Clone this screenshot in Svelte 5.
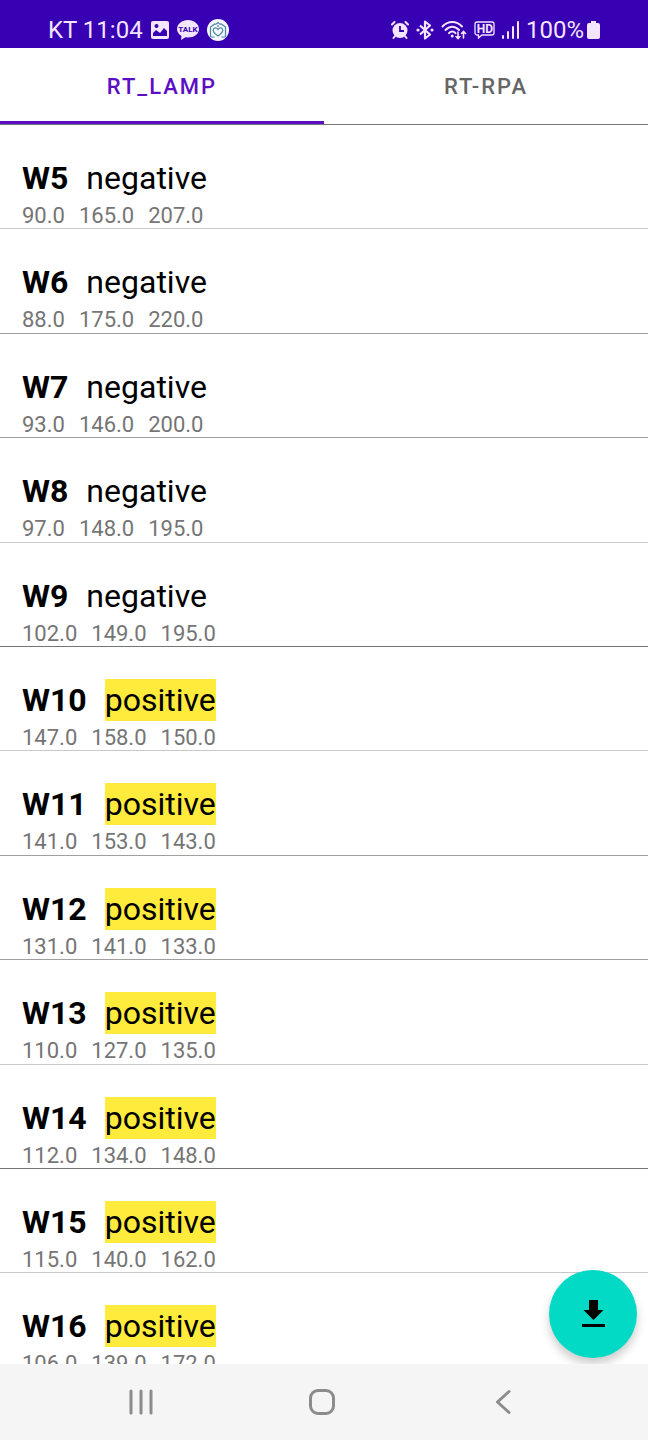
<script lang="ts">
	interface Well {
		name: string;
		result: 'negative' | 'positive';
		values: string[];
	}

	const tabs = ['RT_LAMP', 'RT-RPA'];
	let activeTab = $state('RT_LAMP');

	const wells: Well[] = [
		{ name: 'W5', result: 'negative', values: ['90.0', '165.0', '207.0'] },
		{ name: 'W6', result: 'negative', values: ['88.0', '175.0', '220.0'] },
		{ name: 'W7', result: 'negative', values: ['93.0', '146.0', '200.0'] },
		{ name: 'W8', result: 'negative', values: ['97.0', '148.0', '195.0'] },
		{ name: 'W9', result: 'negative', values: ['102.0', '149.0', '195.0'] },
		{ name: 'W10', result: 'positive', values: ['147.0', '158.0', '150.0'] },
		{ name: 'W11', result: 'positive', values: ['141.0', '153.0', '143.0'] },
		{ name: 'W12', result: 'positive', values: ['131.0', '141.0', '133.0'] },
		{ name: 'W13', result: 'positive', values: ['110.0', '127.0', '135.0'] },
		{ name: 'W14', result: 'positive', values: ['112.0', '134.0', '148.0'] },
		{ name: 'W15', result: 'positive', values: ['115.0', '140.0', '162.0'] },
		{ name: 'W16', result: 'positive', values: ['106.0', '139.0', '172.0'] }
	];
</script>

<div class="screen">
	<header class="status-bar">
		<div class="status-group">
			<span class="clock">KT 11:04</span>
			<svg width="18" height="18" viewBox="0 0 18 18" aria-hidden="true">
				<path
					fill="currentColor"
					fill-rule="evenodd"
					d="M2 0h14a2 2 0 0 1 2 2v14a2 2 0 0 1-2 2H2a2 2 0 0 1-2-2V2a2 2 0 0 1 2-2zM2 15v-3l3-3 4 3 4-5 3 3v5zM5.5 3a2 2 0 1 0 0 4 2 2 0 0 0 0-4z"
				/>
			</svg>
			<svg width="22" height="20" viewBox="0 0 22 20" aria-hidden="true">
				<path
					fill="currentColor"
					d="M11 0C5 0 0 4 0 9c0 3 2 5.5 4.500 7L4 20l4.500-2.800L11 17.500c6 0 11-3.500 11-8.500S17 0 11 0z"
				/>
				<text x="11" y="12" text-anchor="middle" class="talk">TALK</text>
			</svg>
			<svg width="22" height="22" viewBox="0 0 22 22" aria-hidden="true">
				<circle cx="11" cy="11" r="11" fill="#f6f6ff" />
				<g fill="none" stroke="#4b8a9d" stroke-width="1.2">
					<path d="M7.500 18H4.500a1 1 0 0 1-1-1V8l4-2.800h1.500l2-1.700 2 1.700h1.500l4 2.800v9a1 1 0 0 1-1 1h-3" />
					<path d="M11 17C7.500 14.500 6.200 13 6.200 11.200c0-2.800 3.500-3.200 4.800-.7 1.300-2.500 4.800-2.100 4.800.7 0 1.800-1.300 3.300-4.800 5.800zM11 6v2" />
				</g>
			</svg>
		</div>
		<div class="status-group right">
			<svg width="18" height="20" viewBox="0 0 18 20" aria-hidden="true">
				<circle cx="9" cy="10.5" r="7.5" fill="currentColor" />
				<path
					fill="none"
					stroke="currentColor"
					stroke-width="2"
					stroke-linecap="round"
					d="M1 4.500l2.500-2.500M17 4.500l-2.500-2.500M4 16l-1.500 2M14 16l1.500 2"
				/>
				<path fill="none" stroke="#3700b3" stroke-width="1.8" d="M9 6v5h4" />
			</svg>
			<svg width="18" height="20" viewBox="0 0 18 20" aria-hidden="true">
				<path
					fill="none"
					stroke="currentColor"
					stroke-width="2.200"
					stroke-linejoin="round"
					d="M4 5.500l10 9-5 4v-17l5 4-10 9"
				/>
				<circle cx="2" cy="10" r="1.6" fill="currentColor" />
				<circle cx="16" cy="10" r="1.6" fill="currentColor" />
			</svg>
			<svg width="26" height="20" viewBox="0 0 26 20" aria-hidden="true">
				<g fill="none" stroke="currentColor" stroke-width="2" stroke-linecap="round">
					<path d="M1.500 6.500C7 .5 15.500.5 21 6.500M4.500 10c4-4.500 9.500-4.500 13.500 0M8 13.200c2-2.200 4.500-2.200 6.500 0" />
					<path stroke-width="1.6" d="M17 12v6.500M15 16.500l2 2 2-2M22.500 18v-6.500M20.500 13.500l2-2 2 2" />
				</g>
				<circle cx="11.200" cy="16" r="1.500" fill="currentColor" />
			</svg>
			<svg width="21" height="18" viewBox="0 0 21 18" aria-hidden="true">
				<path
					fill="none"
					stroke="currentColor"
					stroke-width="1.3"
					d="M3 1h15a2 2 0 0 1 2 2v9a2 2 0 0 1-2 2H8l-3.500 3V14H3a2 2 0 0 1-2-2V3a2 2 0 0 1 2-2z"
				/>
				<text x="11" y="12" text-anchor="middle" class="hd">HD</text>
			</svg>
			<svg width="17" height="18" viewBox="0 0 17 18" aria-hidden="true">
				<path
					fill="none"
					stroke="currentColor"
					stroke-width="2"
					stroke-linecap="round"
					d="M1 15v2M6 11v6M11 6v11M16 1v16"
				/>
			</svg>
			<span class="battery">
				100%
				<svg width="13" height="18" viewBox="0 0 13 18" aria-hidden="true">
					<path
						fill="currentColor"
						d="M4 0h5v2h2a2 2 0 0 1 2 2v12a2 2 0 0 1-2 2H2a2 2 0 0 1-2-2V4a2 2 0 0 1 2-2h2z"
					/>
				</svg>
			</span>
		</div>
	</header>

	<div class="tabs" role="tablist">
		{#each tabs as tab}
			<button
				class="tab"
				class:active={tab === activeTab}
				role="tab"
				aria-selected={tab === activeTab}
				onclick={() => (activeTab = tab)}
			>
				{tab}
			</button>
		{/each}
	</div>

	<main class="results">
		<ul class="wells">
			{#each wells as well}
				<li class="well">
					<div class="well-head">
						<strong>{well.name}</strong>
						<span class="result" class:positive={well.result === 'positive'}>{well.result}</span>
					</div>
					<div class="values">
						{#each well.values as value}
							<span>{value}</span>
						{/each}
					</div>
				</li>
			{/each}
		</ul>
		<button class="fab" aria-label="Download">
			<svg width="24" height="28" viewBox="0 0 24 28" aria-hidden="true">
				<path fill="#000" d="M8 0h9v10h5.500L12.500 20l-10-10H8zM1 24h23v3H1z" />
			</svg>
		</button>
	</main>

	<nav class="nav-bar">
		<button aria-label="Recent apps">
			<svg width="24" height="26" viewBox="0 0 24 26" aria-hidden="true">
				<path d="M2 2v22M12 2v22M22 2v22" />
			</svg>
		</button>
		<button aria-label="Home">
			<svg width="28" height="28" viewBox="0 0 28 28" aria-hidden="true">
				<rect x="2.500" y="2.500" width="23" height="23" rx="7.500" />
			</svg>
		</button>
		<button aria-label="Back">
			<svg width="16" height="26" viewBox="0 0 16 26" aria-hidden="true">
				<path d="M14 2.500L2.500 13 14 23.500" />
			</svg>
		</button>
	</nav>
</div>

<style>
	:global(body) {
		background: #fff;
	}

	.screen {
		display: flex;
		flex-direction: column;
		height: 100vh;
		font-family: Roboto, 'Liberation Sans', sans-serif;
		color: #000;
	}

	button {
		border: 0;
		padding: 0;
		background: none;
		font: inherit;
		color: inherit;
		cursor: pointer;
	}

	svg {
		display: block;
		flex: none;
	}

	.status-bar {
		display: flex;
		flex: none;
		justify-content: space-between;
		align-items: center;
		box-sizing: border-box;
		height: 48px;
		padding: 12px 48px 0;
		background: #3700b3;
		color: #f3e4ff;
		font-size: 24px;
		line-height: 36px;
	}

	.status-group {
		display: flex;
		align-items: center;
		gap: 8px;
	}

	.status-group.right {
		gap: 7px;
	}

	.talk {
		font-size: 8px;
		font-weight: 700;
		fill: #3700b3;
	}

	.hd {
		font-size: 12px;
		font-weight: 700;
		fill: currentColor;
	}

	.battery {
		display: flex;
		align-items: center;
		gap: 3px;
	}

	.tabs {
		display: flex;
		flex: none;
		border-bottom: 1px solid #757575;
	}

	.tab {
		flex: 1;
		height: 76px;
		padding-top: 4px;
		border-bottom: 3px solid transparent;
		font-size: 22px;
		font-weight: 500;
		letter-spacing: 2px;
		color: #666;
	}

	.tab.active {
		border-color: #5b0fc4;
		color: #5b0fc4;
	}

	.results {
		position: relative;
		flex: 1;
		min-height: 0;
		overflow: hidden;
	}

	.wells {
		height: 100%;
		margin: 0;
		padding: 0;
		overflow-y: auto;
		scrollbar-width: none;
		list-style: none;
	}

	.well {
		box-sizing: border-box;
		height: 104px;
		padding: 32px 22px 0;
		border-bottom: 1px solid #c8c8c8;
	}

	.well:nth-child(5n + 2),
	.well:nth-child(5n + 4) {
		height: 105px;
	}

	.well:nth-child(5n + 2),
	.well:nth-child(5n + 3) {
		border-color: #a0a0a0;
	}

	.well:nth-child(5n) {
		border-color: #757575;
	}

	.well-head {
		display: flex;
		gap: 18px;
		font-size: 32px;
		line-height: 42px;
	}

	.positive {
		background: #ffeb3b;
	}

	.values {
		display: flex;
		gap: 14px;
		font-size: 22px;
		line-height: 34px;
		color: #757575;
	}

	.fab {
		position: absolute;
		right: 11px;
		bottom: 6px;
		display: grid;
		place-items: center;
		width: 88px;
		height: 88px;
		border-radius: 50%;
		background: #03dac5;
		box-shadow: 0 6px 10px rgba(0, 0, 0, 0.2);
	}

	.nav-bar {
		display: flex;
		flex: none;
		height: 76px;
		padding: 0 54px 0 50px;
		background: #f5f5f5;
	}

	.nav-bar button {
		display: grid;
		flex: 1;
		place-items: center;
	}

	.nav-bar svg {
		fill: none;
		stroke: #8c8c8c;
		stroke-width: 3;
		stroke-linecap: round;
		stroke-linejoin: round;
	}
</style>
